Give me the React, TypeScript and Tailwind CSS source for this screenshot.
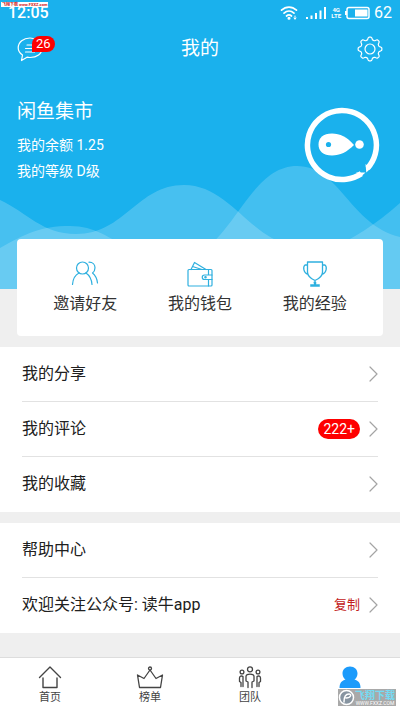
import React from "react";

const stroke = {
  fill: "none",
  stroke: "currentColor",
  strokeLinecap: "round" as const,
  strokeLinejoin: "round" as const,
};

function StatusBar() {
  return (
    <div className="flex h-[25px] items-center justify-between px-2">
      <span className="text-[16px] leading-3 font-medium">12:05</span>
      <div className="flex items-center gap-1">
        <svg className="mr-1 h-4 w-[18px]" viewBox="0 0 18 16" {...stroke} strokeWidth="1.7" aria-hidden="true">
          <path d="M1.5 5.2C6 1 12 1 16.5 5.2M4 8.2c3-2.7 7-2.7 10 0M6.5 11c1.6-1.3 3.4-1.3 5 0" />
          <circle cx="9" cy="13.3" r="0.7" fill="currentColor" />
          <path d="M15 11v3M14 13l1 1.200 1-1.200" strokeWidth="1" />
        </svg>
        <svg className="h-4 w-[21px]" viewBox="0 0 21 16" fill="currentColor" aria-hidden="true">
          <path d="M0 12h2v2H0zM4.500 10.500h2V14h-2zM9 8h2v6H9zM13.500 5.500h2V14h-2zM18 2h2v12h-2z" />
        </svg>
        <span className="flex flex-col items-center text-[6px] leading-[6px] font-bold">
          <span>4G</span>
          <span>LTE</span>
        </span>
        <svg className="h-4 w-[25px]" viewBox="1 0 25 16" aria-hidden="true">
          <rect x="3" y="2.500" width="22" height="11" rx="2" fill="none" stroke="white" strokeWidth="1.500" />
          <path d="M11 4.500h12.500v7H11zM1 6h2v4H1z" fill="white" />
        </svg>
        <span className="text-[16px] leading-6">62</span>
      </div>
    </div>
  );
}

const gearPath = (() => {
  const parts: string[] = [];
  for (let i = 0; i <= 96; i++) {
    const a = (i / 96) * Math.PI * 2;
    const r = 10.6 + 1.3 * Math.tanh(2.2 * Math.cos(8 * a));
    parts.push(`${i ? "L" : "M"}${(13 + r * Math.sin(a)).toFixed(2)} ${(13 - r * Math.cos(a)).toFixed(2)}`);
  }
  return parts.join("") + "Z";
})();

function Waves() {
  return (
    <svg className="absolute inset-x-0 bottom-0 h-[129px] w-full" viewBox="0 0 400 129" preserveAspectRatio="none" fill="white" aria-hidden="true">
      <path fillOpacity="0.2" d="M0 40C28 53 42 74 76 74C125 74 137 25 184 25C229 25 250 78 290 84V129H0Z" />
      <path fillOpacity="0.18" d="M190 98C235 80 250 6 297 6C340 6 350 65 400 77V129H190Z" />
      <path fillOpacity="0.18" d="M0 88C25 74 40 66 70 66C95 66 110 78 130 90V129H0Z" />
      <path fillOpacity="0.18" d="M330 88C352 80 375 65 400 43V129H330Z" />
    </svg>
  );
}

function Avatar() {
  return (
    <svg className="h-[76px] w-[76px] shrink-0" viewBox="0 0 76 76" aria-label="闲鱼集市" role="img">
      <path d="M63.600 61.100A34.500 34.500 0 1 0 57.300 66.600" fill="none" stroke="white" strokeWidth="5.500" />
      <path d="M52 65.500h9.500L57 69.500ZM61.500 57l0.800 8.500L66.500 61.500Z" fill="white" />
      <path d="M50 38C43 45 36 48.500 28 48.500C19 48.500 14.500 44 14.500 37.500C14.500 31 19 26.500 28 26.500C36 26.500 43 30 50 38Z" fill="white" />
      <circle cx="24.500" cy="37.500" r="2.600" fill="#1ab1ed" />
      <circle cx="55.500" cy="37.500" r="4.300" fill="white" />
    </svg>
  );
}

function FriendsIcon() {
  return (
    <svg className="h-7 w-7" viewBox="0 0 28 28" {...stroke} strokeWidth="1.200" aria-hidden="true">
      <circle cx="11.500" cy="8" r="6" />
      <path d="M1.500 24.500C2 18 5 14.500 8 13M15 13c3 2 5.500 5 6 11.500M18 2.200c4 0 6 2.800 6 5.500 0 2.300-1 4.200-2.500 5.300 2.500 2 4.500 5.500 5 10" />
    </svg>
  );
}

function WalletIcon() {
  return (
    <svg className="h-7 w-7" viewBox="0 0 28 28" {...stroke} strokeWidth="1.200" aria-hidden="true">
      <rect x="2" y="9.500" width="24" height="16.500" rx="1" />
      <path d="M5 9.500l3.500-7L20 9.500M6.500 6.500L16 9.500M22.500 9.500v5.500M22.500 19.500V26M26 15h-7.500a2.200 2.200 0 0 0 0 4.500H26" />
      <circle cx="19.500" cy="17.200" r="0.700" />
    </svg>
  );
}

function TrophyIcon() {
  return (
    <svg className="h-7 w-7" viewBox="0 0 28 28" {...stroke} strokeWidth="1.300" aria-hidden="true">
      <path d="M6.500 2h15v10c0 4-3 6.500-7.500 8.500C9.500 18.500 6.500 16 6.500 12ZM6.500 5H4C2 6.500 2 13 7 14.500M21.500 5H24c2 1.500 2 8-3 9.500M14 20.500V25" />
      <path d="M13 22h2v2.500h3.500v2h-9v-2H13z" fill="currentColor" strokeWidth="0.500" />
    </svg>
  );
}

const shortcuts = [
  { label: "邀请好友", icon: <FriendsIcon /> },
  { label: "我的钱包", icon: <WalletIcon /> },
  { label: "我的经验", icon: <TrophyIcon /> },
];

type RowItem = { label: string; extra?: React.ReactNode };

const groups: RowItem[][] = [
  [
    { label: "我的分享" },
    {
      label: "我的评论",
      extra: <span className="rounded-full bg-[#fe0000] px-[5px] text-[14px] leading-5 text-white">222+</span>,
    },
    { label: "我的收藏" },
  ],
  [
    { label: "帮助中心" },
    { label: "欢迎关注公众号: 读牛app", extra: <span className="text-[13px] text-[#c22020]">复制</span> },
  ],
];

function Group({ items }: { items: RowItem[] }) {
  return (
    <ul className="bg-white px-[22px]">
      {items.map((item) => (
        <li key={item.label} className="border-b border-[#e2e2e2] last:border-transparent">
          <button type="button" className="flex h-[54px] w-full items-center text-left">
            <span className="flex-1 text-[16px] text-[#202020]">{item.label}</span>
            {item.extra}
            <svg className="ml-2 h-4 w-[10px] text-[#a4a4a4]" viewBox="0 0 10 16" {...stroke} strokeWidth="1.200" aria-hidden="true">
              <path d="M2 1l7 7-7 7" />
            </svg>
          </button>
        </li>
      ))}
    </ul>
  );
}

const tabs = [
  {
    name: "首页",
    labelled: true,
    icon: (
      <svg className="h-6 w-7" viewBox="0 0 28 24" {...stroke} strokeWidth="1.400" aria-hidden="true">
        <path d="M3.500 11.500L14 1l10.500 10.500M7 12v9.500h14V12" />
      </svg>
    ),
  },
  {
    name: "榜单",
    labelled: true,
    icon: (
      <svg className="h-6 w-7" viewBox="0 0 28 24" {...stroke} strokeWidth="1.300" aria-hidden="true">
        <path d="M3.500 21.500L1.500 9l6.500 3.500L14 4l6 8.500L26.500 9l-2 12.500Z" />
        <circle cx="14" cy="2.500" r="1.500" />
      </svg>
    ),
  },
  {
    name: "团队",
    labelled: true,
    icon: (
      <svg className="h-6 w-7" viewBox="0 0 28 24" {...stroke} strokeWidth="1.300" aria-hidden="true">
        <circle cx="14" cy="3.300" r="2.500" />
        <circle cx="6" cy="6" r="1.900" />
        <circle cx="22" cy="6" r="1.900" />
        <path d="M12 21.500V16l-2-1V10.500c0-3.300 8-3.300 8 0V15l-2 1v5.500M7 20.500V10.500C5.500 9.500 3.500 10 3.500 12v3.500l1.500 1v4M21 20.500V10.500c1.500-1 3.500-.5 3.500 1.500v3.500l-1.500 1v4" />
      </svg>
    ),
  },
  {
    name: "我的",
    labelled: false,
    icon: (
      <svg className="h-6 w-7 text-[#1c9bfb]" viewBox="0 0 28 24" fill="currentColor" aria-hidden="true">
        <path d="M14 0.500c4.500 0 7.500 3 7.500 7 0 2.500-1.200 4.800-3 6 4 1.300 6 3.500 6 8.500h-21c0-5 2-7.200 6-8.500-1.800-1.200-3-3.500-3-6 0-4 3-7 7.500-7Z" />
      </svg>
    ),
  },
];

export default function App() {
  return (
    <div className="relative flex min-h-screen flex-col bg-[#efefef] font-[Roboto,'Noto_Sans_CJK_SC',sans-serif]">
      <span className="absolute top-[2px] left-[1px] z-10 bg-white px-px text-[4px] leading-[5px] font-bold whitespace-nowrap text-[#d02020]">
        飞翔下载 www.FXXZ.com
      </span>

      <header className="relative h-[289px] bg-[#1ab1ed] text-white">
        <Waves />
        <div className="relative">
          <StatusBar />
          <div className="flex h-12 items-center justify-between px-[17px]">
            <button type="button" aria-label="消息" className="relative h-[26px] w-[26px]">
              <svg className="h-[26px] w-[26px]" viewBox="0 0 26 26" {...stroke} strokeWidth="1.200" aria-hidden="true">
                <path d="M4.500 24.500L5.500 19C2.500 17 1.200 14.500 1.200 12 1.200 6 6.500 2 13 2s12 4 12 10-5 9.500-12 9.500c-1 0-2-.1-3-.3Z" />
                <path d="M10 9h8M8.500 12.500h9M8.500 16h9" />
              </svg>
              <span className="absolute top-0 left-[15px] rounded-full rounded-bl-none bg-[#fe0000] px-1 text-[13px] leading-4">
                26
              </span>
            </button>
            <h1 className="text-[19px] leading-7">我的</h1>
            <button type="button" aria-label="设置" className="h-[26px] w-[26px]">
              <svg className="h-[26px] w-[26px]" viewBox="0 0 26 26" {...stroke} strokeWidth="1.200" aria-hidden="true">
                <path d={gearPath} />
                <circle cx="13" cy="13" r="5" />
              </svg>
            </button>
          </div>
          <div className="flex items-start justify-between px-[17px] pt-[25px]">
            <div>
              <h2 className="text-[19px] leading-7">闲鱼集市</h2>
              <p className="mt-[6px] text-[14px] leading-[26px]">我的余额 1.25</p>
              <p className="text-[14px] leading-[26px]">我的等级 D级</p>
            </div>
            <div className="pt-[9px] pr-[3px]">
              <Avatar />
            </div>
          </div>
        </div>
      </header>

      <main className="relative -mt-[50px] flex flex-col gap-[11px]">
        <section className="mx-[17px] flex h-[97px] rounded bg-white px-[11px]">
          {shortcuts.map((s) => (
            <button key={s.label} type="button" className="flex flex-1 flex-col items-center gap-1 pt-[21px] text-[#2fb0df]">
              {s.icon}
              <span className="text-[16px] leading-6 text-[#333333]">{s.label}</span>
            </button>
          ))}
        </section>
        {groups.map((items) => (
          <Group key={items[0].label} items={items} />
        ))}
      </main>

      <nav className="mt-auto flex h-[54px] border-t border-[#dddddd] bg-white text-[#444444]">
        {tabs.map((t) => (
          <button key={t.name} type="button" aria-label={t.name} className="flex flex-1 flex-col items-center pt-2">
            {t.icon}
            {t.labelled && <span className="text-[11px] leading-4">{t.name}</span>}
          </button>
        ))}
      </nav>

      <div className="absolute right-1 bottom-[5px] flex h-[17px] w-[58px] items-center bg-[#a9a9a9] text-white">
        <svg className="h-[17px] w-[17px] shrink-0" viewBox="0 0 17 17" {...stroke} strokeWidth="1.500" aria-hidden="true">
          <circle cx="8.500" cy="8.500" r="7" fill="#8794a0" />
          <path d="M6 13c0-5 1-8 5-8 3 0 2 4-3 4" />
        </svg>
        <span className="flex flex-col items-center whitespace-nowrap">
          <span className="text-[10px] leading-[11px] font-bold text-[#74dcf4]">飞翔下载</span>
          <span className="text-[5px] leading-[5px]">WWW.FXXZ.COM</span>
        </span>
      </div>
    </div>
  );
}
